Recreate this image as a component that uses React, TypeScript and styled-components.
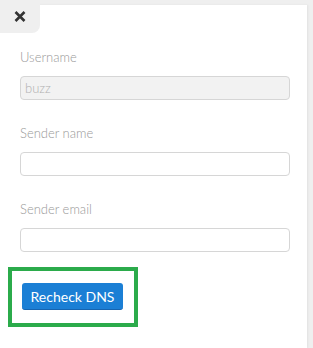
import React from 'react';
import styled, { createGlobalStyle } from 'styled-components';

const GlobalStyle = createGlobalStyle`
    html, body {
        margin: 0;
        padding: 0;
        background: #efefef;
        font-family: Lato, "Open Sans", sans-serif;
    }
`;

const Page = styled.div`
    padding: 5px 6px 0 0;
    height: 343px;
    overflow: hidden;
`;

const Panel = styled.div`
    position: relative;
    background: #fff;
    min-height: 343px;
    box-shadow: 1px 0 2px rgba(0, 0, 0, 0.06);
    padding: 44px 0 0 20px;
    box-sizing: border-box;
`;

const CloseTab = styled.button`
    position: absolute;
    top: -5px;
    left: 0;
    width: 40px;
    height: 33px;
    border: none;
    padding: 0;
    background: #efefef;
    border-bottom-right-radius: 8px;
    display: flex;
    align-items: center;
    justify-content: center;
    cursor: pointer;
`;

const Field = styled.div`
    display: flex;
    flex-direction: column;
    width: 270px;
    margin-bottom: 25px;
`;

const Label = styled.label`
    font-size: 13px;
    line-height: 16px;
    font-weight: 300;
    color: #999;
    margin-bottom: 11px;
`;

const Input = styled.input<{ disabled?: boolean }>`
    box-sizing: border-box;
    height: 24px;
    width: 100%;
    border: 1px solid #d6d6d6;
    border-radius: 4px;
    padding: 0 4px;
    font-family: Lato, sans-serif;
    font-size: 13px;
    font-weight: 300;
    color: #b0b0b0;
    background: ${({ disabled }) => (disabled ? '#f2f2f2' : '#fff')};
    outline: none;
`;

const Highlight = styled.div`
    display: inline-flex;
    margin: -10px 0 0 -12px;
    padding: 12px 11px 13px 10px;
    border: 4px solid #2bab4b;
`;

const Button = styled.button`
    height: 27px;
    width: 101px;
    border: none;
    border-bottom: 1px solid #1664b0;
    border-radius: 3px;
    background: #1b7fd5;
    color: #fff;
    font-family: Lato, sans-serif;
    font-size: 14px;
    padding: 0;
    cursor: pointer;
`;

const CloseIcon = () => (
    <svg width="12" height="11" viewBox="0 0 12 11">
        <path d="M1.5 1 L10.5 10 M10.5 1 L1.5 10" stroke="#333" strokeWidth="2.6" strokeLinecap="butt" />
    </svg>
);

export default function App() {
    return (
        <>
            <GlobalStyle />
            <Page>
                <Panel>
                    <CloseTab aria-label="close">
                        <CloseIcon />
                    </CloseTab>
                    <Field>
                        <Label>Username</Label>
                        <Input disabled defaultValue="buzz" />
                    </Field>
                    <Field>
                        <Label>Sender name</Label>
                        <Input />
                    </Field>
                    <Field>
                        <Label>Sender email</Label>
                        <Input />
                    </Field>
                    <Highlight>
                        <Button>Recheck DNS</Button>
                    </Highlight>
                </Panel>
            </Page>
        </>
    );
}
